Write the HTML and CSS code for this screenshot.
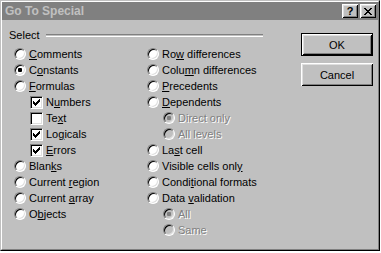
FILE: index.html
```html
<!DOCTYPE html>
<html lang="en">
<head>
    <meta charset="UTF-8">
    <title>Go To Special</title>
    <link rel="stylesheet" href="styles.css">
</head>
<body>
    <div class="dialog">
        <div class="frame">
            <div class="titlebar">
                <span class="title">Go To Special</span>
                <div class="caption-btns">
                    <span class="cbtn help">?</span>
                    <span class="cbtn close">
                        <svg width="8" height="7" viewBox="0 0 8 7" shape-rendering="crispEdges"><path d="M0 0h2v1h-2z M6 0h2v1h-2z M1 1h2v1h-2z M5 1h2v1h-2z M2 2h4v1h-4z M3 3h2v1h-2z M2 4h4v1h-4z M1 5h2v1h-2z M5 5h2v1h-2z M0 6h2v1h-2z M6 6h2v1h-2z" fill="#000"/></svg>
                    </span>
                </div>
            </div>

            <div class="content">
                <div class="select-panel">
                    <div class="group-head"><span>Select</span><span class="etch"></span></div>

                    <div class="columns">
                        <!-- left column -->
                        <div class="col">
                            <div class="opt"><span class="radio"></span><span><u>C</u>omments</span></div>
                            <div class="opt"><span class="radio on"></span><span>C<u>o</u>nstants</span></div>
                            <div class="opt"><span class="radio"></span><span><u>F</u>ormulas</span></div>
                            <div class="opt sub"><span class="check on"></span><span>N<u>u</u>mbers</span></div>
                            <div class="opt sub"><span class="check"></span><span>Te<u>x</u>t</span></div>
                            <div class="opt sub"><span class="check on"></span><span>Lo<u>g</u>icals</span></div>
                            <div class="opt sub"><span class="check on"></span><span><u>E</u>rrors</span></div>
                            <div class="opt"><span class="radio"></span><span>Blan<u>k</u>s</span></div>
                            <div class="opt"><span class="radio"></span><span>Current <u>r</u>egion</span></div>
                            <div class="opt"><span class="radio"></span><span>Current <u>a</u>rray</span></div>
                            <div class="opt"><span class="radio"></span><span>O<u>b</u>jects</span></div>
                        </div>

                        <!-- right column -->
                        <div class="col">
                            <div class="opt"><span class="radio"></span><span>Ro<u>w</u> differences</span></div>
                            <div class="opt"><span class="radio"></span><span>Colu<u>m</u>n differences</span></div>
                            <div class="opt"><span class="radio"></span><span><u>P</u>recedents</span></div>
                            <div class="opt"><span class="radio"></span><span><u>D</u>ependents</span></div>
                            <div class="opt sub disabled"><span class="radio on"></span><span>Direct only</span></div>
                            <div class="opt sub disabled"><span class="radio"></span><span>All levels</span></div>
                            <div class="opt"><span class="radio"></span><span>La<u>s</u>t cell</span></div>
                            <div class="opt"><span class="radio"></span><span>Visible cells onl<u>y</u></span></div>
                            <div class="opt"><span class="radio"></span><span>Condi<u>t</u>ional formats</span></div>
                            <div class="opt"><span class="radio"></span><span>Data <u>v</u>alidation</span></div>
                            <div class="opt sub disabled"><span class="radio on"></span><span>All</span></div>
                            <div class="opt sub disabled"><span class="radio"></span><span>Same</span></div>
                        </div>
                    </div>
                </div>

                <div class="buttons">
                    <button class="btn default">OK</button>
                    <button class="btn">Cancel</button>
                </div>
            </div>
        </div>
    </div>
</body>
</html>
```

FILE: styles.css
```css
body {
    margin: 0;
    background: #fff;
    font-family: 'Liberation Sans', Arial, sans-serif;
    font-size: 11px;
    color: #000;
}

.dialog {
    width: 380px;
    height: 251px;
    box-sizing: border-box;
    border: 1px solid;
    border-color: #c0c0c0 #000 #000 #c0c0c0;
    background: #c0c0c0;
}

.frame {
    height: 100%;
    box-sizing: border-box;
    border: 1px solid;
    border-color: #fff #808080 #808080 #fff;
}

.titlebar {
    height: 18px;
    background: #808080;
    display: flex;
    align-items: center;
    justify-content: space-between;
    padding-left: 3px;
}

.title {
    color: #c0c0c0;
    font-weight: bold;
    font-size: 12px;
}

.caption-btns {
    display: flex;
    gap: 2px;
    margin-right: 2px;
}

.cbtn {
    width: 16px;
    height: 14px;
    box-sizing: border-box;
    background: #c0c0c0;
    display: flex;
    align-items: center;
    justify-content: center;
    box-shadow: inset 1px 1px 0 #fff, inset -1px -1px 0 #000, inset 2px 2px 0 #dfdfdf, inset -2px -2px 0 #808080;
}

.help {
    font-weight: bold;
    font-size: 11px;
    line-height: 14px;
}

.content {
    display: flex;
    padding: 9px 0 0 7px;
}

.select-panel {
    width: 255px;
}

.group-head {
    display: flex;
    align-items: center;
    height: 13px;
    line-height: 13px;
    margin-bottom: 4px;
}

.etch {
    flex: 1;
    margin-left: 6px;
    height: 1px;
    border-top: 1px solid #808080;
    border-bottom: 1px solid #fff;
    margin-right: 1px;
}

.columns {
    display: grid;
    grid-template-columns: 133px 1fr;
    padding-left: 5px;
}

.opt {
    display: flex;
    align-items: center;
    height: 16px;
    white-space: nowrap;
}

.opt.sub {
    margin-left: 16px;
}

.opt.disabled {
    color: #808080;
    text-shadow: 1px 1px 0 #fff;
}

.radio {
    width: 12px;
    height: 12px;
    box-sizing: border-box;
    border-radius: 50%;
    border: 1px solid;
    border-color: #808080 #fff #fff #808080;
    background: #fff;
    box-shadow: inset 1px 1px 0 #000, inset -1px -1px 0 #dfdfdf;
    margin-right: 3px;
    display: flex;
    align-items: center;
    justify-content: center;
    flex: none;
}

.radio.on::after {
    content: "";
    width: 4px;
    height: 4px;
    border-radius: 1px;
    background: #000;
}

.disabled .radio {
    background: #c0c0c0;
}

.disabled .radio.on::after {
    background: #808080;
}

.check {
    width: 13px;
    height: 13px;
    box-sizing: border-box;
    border: 1px solid;
    border-color: #808080 #fff #fff #808080;
    background: #fff;
    box-shadow: inset 1px 1px 0 #000, inset -1px -1px 0 #dfdfdf;
    margin-right: 3px;
    flex: none;
    display: flex;
    align-items: center;
    justify-content: center;
}

.check.on {
    background: #fff url("data:image/svg+xml;utf8,<svg xmlns='http://www.w3.org/2000/svg' width='7' height='7' shape-rendering='crispEdges'><path d='M6 0h1v1h-1z M5 1h2v1h-2z M0 2h1v1h-1z M4 2h3v1h-3z M0 3h2v1h-2z M3 3h3v1h-3z M0 4h5v1h-5z M1 5h3v1h-3z M2 6h1v1h-1z' fill='black'/></svg>") no-repeat 2px 2px;
}

.buttons {
    margin-left: 37px;
    margin-top: 4px;
    display: flex;
    flex-direction: column;
    gap: 7px;
}

.btn {
    width: 72px;
    height: 23px;
    box-sizing: border-box;
    background: #c0c0c0;
    border: none;
    font-family: inherit;
    font-size: 11px;
    color: #000;
    padding: 0;
    box-shadow: inset 1px 1px 0 #fff, inset -1px -1px 0 #000, inset 2px 2px 0 #dfdfdf, inset -2px -2px 0 #808080;
}

.btn.default {
    border: 1px solid #000;
}
```
